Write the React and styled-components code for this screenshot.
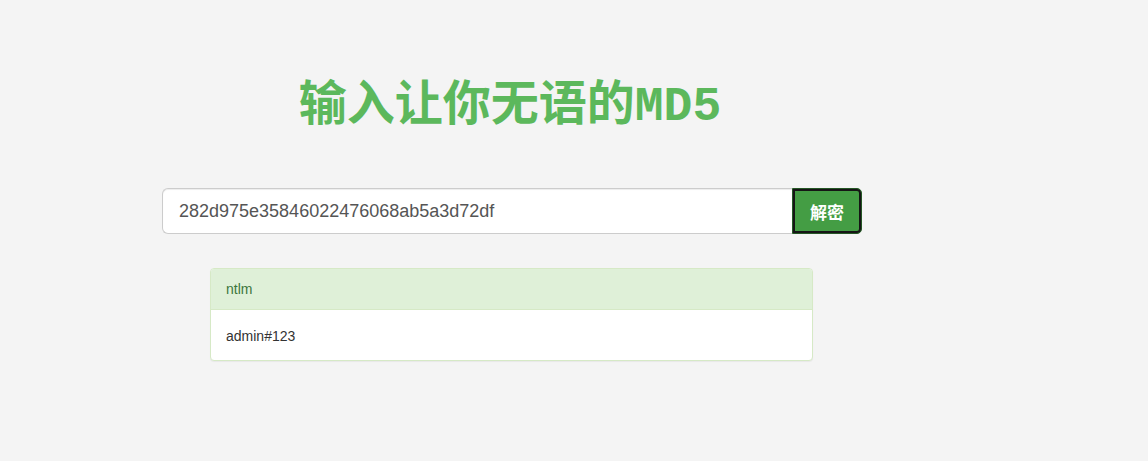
import React, { useState } from 'react';
import styled, { createGlobalStyle } from 'styled-components';

const GlobalStyle = createGlobalStyle`
  html, body {
    margin: 0;
    padding: 0;
    background: #f4f4f4;
  }
  body {
    font-family: "Liberation Sans", Arial, "Noto Sans CJK SC", sans-serif;
    font-size: 14px;
    line-height: 1.42857;
    color: #333;
  }
  * {
    box-sizing: border-box;
  }
`;

const Page = styled.div`
  min-height: 461px;
  padding-top: 73px;
`;

const Main = styled.div`
  width: 700px;
  margin-left: 162px;
`;

const Title = styled.h1`
  margin: 0 0 47px;
  text-align: center;
  font-family: "Liberation Mono", "Noto Sans CJK SC", monospace;
  font-size: 48px;
  font-weight: 700;
  line-height: 68px;
  color: #5cb85c;
  padding-right: 4px;
`;

const InputGroup = styled.div`
  display: flex;
  height: 46px;
`;

const Input = styled.input`
  flex: 1;
  min-width: 0;
  height: 46px;
  padding: 10px 16px;
  font-family: "Liberation Sans", Arial, sans-serif;
  font-size: 18px;
  color: #555;
  background: #fff;
  border: 1px solid #ccc;
  border-right: 0;
  border-radius: 6px 0 0 6px;
  box-shadow: inset 0 1px 1px rgba(0, 0, 0, 0.075);
  outline: none;
`;

const Button = styled.button`
  width: 70px;
  height: 46px;
  padding: 0;
  font-family: "Noto Sans CJK SC", sans-serif;
  font-size: 17px;
  font-weight: 700;
  color: #fff;
  background: #449d44;
  border: 1px solid #255625;
  border-radius: 0 5px 5px 0;
  box-shadow: inset 0 0 0 2px #151515;
  cursor: pointer;
  outline: none;
`;

const Panel = styled.div`
  width: 603px;
  margin: 34px 0 0 48px;
  background: #fff;
  border: 1px solid #d6e9c6;
  border-radius: 4px;
  box-shadow: 0 1px 1px rgba(0, 0, 0, 0.05);
`;

const PanelHeading = styled.div`
  padding: 11px 15px 9px;
  color: #3c763d;
  background: #dff0d8;
  border-bottom: 1px solid #d6e9c6;
  border-radius: 3px 3px 0 0;
`;

const PanelBody = styled.div`
  padding: 17px 15px 13px;
  color: #333;
`;

const App = () => {
  const [hash, setHash] = useState('282d975e35846022476068ab5a3d72df');

  return (
    <>
      <GlobalStyle />
      <Page>
        <Main>
          <Title>输入让你无语的MD5</Title>
          <InputGroup>
            <Input value={hash} onChange={(e) => setHash(e.target.value)} />
            <Button type='button'>解密</Button>
          </InputGroup>
          <Panel>
            <PanelHeading>ntlm</PanelHeading>
            <PanelBody>admin#123</PanelBody>
          </Panel>
        </Main>
      </Page>
    </>
  );
};

export default App;
